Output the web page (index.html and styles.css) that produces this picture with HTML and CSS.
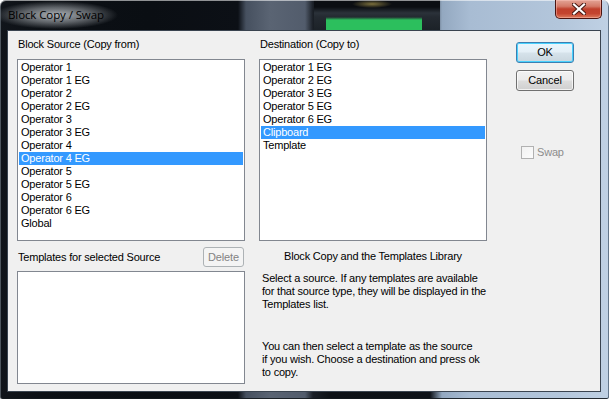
FILE: index.html
```html
<!DOCTYPE html>
<html>
<head>
<meta charset="utf-8">
<link rel="stylesheet" href="styles.css">
</head>
<body>
<div class="window">
  <div class="titlebar">
    <span class="title">Block Copy / Swap</span>
    <div class="close">
      <svg width="14" height="12" viewBox="0 0 14 12">
        <path d="M2 1.5 L12 10.5 M12 1.5 L2 10.5" stroke="#4a1a14" stroke-width="4.2" stroke-linecap="square"/>
        <path d="M2 1.5 L12 10.5 M12 1.5 L2 10.5" stroke="#ffffff" stroke-width="2.2" stroke-linecap="square"/>
      </svg>
    </div>
  </div>
  <div class="client">
    <div class="col">
      <div class="label">Block Source (Copy from)</div>
      <div class="listbox main">
        <div class="item">Operator 1</div>
        <div class="item">Operator 1 EG</div>
        <div class="item">Operator 2</div>
        <div class="item">Operator 2 EG</div>
        <div class="item">Operator 3</div>
        <div class="item">Operator 3 EG</div>
        <div class="item">Operator 4</div>
        <div class="item sel">Operator 4 EG</div>
        <div class="item">Operator 5</div>
        <div class="item">Operator 5 EG</div>
        <div class="item">Operator 6</div>
        <div class="item">Operator 6 EG</div>
        <div class="item">Global</div>
      </div>
      <div class="tplrow">
        <span class="label">Templates for selected Source</span>
        <div class="btn disabled small">Delete</div>
      </div>
      <div class="listbox tpl"></div>
    </div>
    <div class="col">
      <div class="label">Destination (Copy to)</div>
      <div class="listbox main">
        <div class="item">Operator 1 EG</div>
        <div class="item">Operator 2 EG</div>
        <div class="item">Operator 3 EG</div>
        <div class="item">Operator 5 EG</div>
        <div class="item">Operator 6 EG</div>
        <div class="item sel">Clipboard</div>
        <div class="item">Template</div>
      </div>
      <div class="heading">Block Copy and the Templates Library</div>
      <p class="para first">Select a source. If any templates are available<br>for that source type, they will be displayed in the<br>Templates list.</p>
      <p class="para second">You can then select a template as the source<br>if you wish. Choose a destination and press ok<br>to copy.</p>
    </div>
    <div class="col side">
      <div class="btn default">OK</div>
      <div class="btn">Cancel</div>
      <label class="check"><span class="box"></span><span class="clabel">Swap</span></label>
    </div>
  </div>
</div>
</body>
</html>
```
FILE: styles.css
```css
* { box-sizing: border-box; }
html, body { margin: 0; padding: 0; background: #ffffff; }
body { width: 609px; height: 399px; overflow: hidden; }

.window {
  width: 609px;
  height: 399px;
  border-radius: 6px 6px 2px 2px;
  display: flex;
  flex-direction: column;
  padding: 0 8px 7px 7px;
  box-shadow: inset 0 1px 0 rgba(255,255,255,0.55), inset 1px 0 0 rgba(120,130,140,0.6), inset -1px 0 0 rgba(60,80,100,0.7), inset 0 -1px 0 rgba(20,25,30,0.9);
  background:
    radial-gradient(ellipse 62px 14px at 56px 15px, rgba(200,205,210,0.85) 0%, rgba(160,165,170,0.55) 55%, rgba(160,165,170,0) 100%),
    radial-gradient(ellipse 20px 4px at 372px 4px, rgba(150,135,70,0.8) 0%, rgba(150,135,70,0) 100%),
    linear-gradient(to bottom, rgba(44,191,93,0) 0, #2cbf5d 3px, #2cbf5d 100%) 326px 17px / 96px 13px no-repeat,
    linear-gradient(to bottom, #0b0e12 0, #0b0e12 7px, #2b323a 13px, #242a31 17px, #1c2228 30px) 314px 0 / 126px 30px no-repeat,
    linear-gradient(to right,
      #11151b 0px, #0c1015 40px, #0a0e13 150px, #0c1016 238px,
      #46505f 246px, #5a6473 270px, #525c6c 305px, #1a1f26 313px,
      #0d1116 330px, #0e1218 430px, #93a8c0 442px, #a8bcd3 470px,
      #b3c6db 560px, #c0d1e4 609px);
}

.titlebar {
  height: 30px;
  flex: none;
  display: flex;
  align-items: flex-start;
}
.title {
  font-family: "Open Sans", "Noto Sans", sans-serif;
  font-size: 11.5px;
  color: #000;
  margin: 7px 0 0 1px;
  line-height: 16px;
  letter-spacing: -0.1px;
}
.close {
  margin-left: auto;
  margin-right: -1px;
  width: 47px;
  height: 19px;
  border: 1px solid #4b1410;
  border-top: none;
  border-radius: 0 0 5px 5px;
  background: linear-gradient(#e3a496 0%, #d47a68 35%, #c0402c 50%, #c4442f 75%, #dc7a5c 100%);
  box-shadow: inset 0 0 0 1px rgba(255,200,190,0.45);
  display: flex;
  align-items: center;
  justify-content: center;
}
.close svg { display: block; margin-top: -1px; }

.client {
  flex: 1;
  border: 1px solid #3a4450;
  background: #f0f0f0;
  display: grid;
  grid-template-columns: 228px 228px 73px;
  column-gap: 14px;
  padding: 7px 0 0 9px;
  font-family: "Liberation Sans", Arial, sans-serif;
  font-size: 11px;
  line-height: 13px;
  color: #000;
  letter-spacing: -0.2px;
}
.col { display: flex; flex-direction: column; }
.col.side { margin-left: 15px; padding-top: 4px; }

.label { padding-left: 1px; height: 13px; white-space: nowrap; }

.listbox {
  background: #fff;
  border: 1px solid #828790;
  padding: 1px;
}
.listbox.main { margin-top: 8px; height: 182px; }
.listbox.tpl { margin-top: 4px; height: 113px; }
.item { height: 13px; padding-left: 2px; white-space: nowrap; }
.item.sel { background: #3399ff; color: #fff; }

.tplrow {
  margin-top: 6px;
  height: 20px;
  display: flex;
  align-items: center;
  justify-content: space-between;
}

.btn {
  height: 21px;
  border: 1px solid #707070;
  border-radius: 3px;
  background: linear-gradient(#f2f2f2 0%, #ebebeb 48%, #dddddd 52%, #cfcfcf 100%);
  box-shadow: inset 0 0 0 1px rgba(255,255,255,0.7);
  display: flex;
  align-items: center;
  justify-content: center;
  font-size: 11px;
  letter-spacing: -0.1px;
}
.btn.default {
  border-color: #3c7fb1;
  box-shadow: inset 0 0 0 1px #48d1fe;
  background: linear-gradient(#eaf6fd 0%, #e4eff6 48%, #d6e3eb 52%, #c9d6de 100%);
}
.side .btn + .btn { margin-top: 7px; }
.btn.small { width: 41px; height: 20px; margin-right: 1px; }
.btn.disabled {
  border-color: #adb2b5;
  background: #f4f4f4;
  box-shadow: none;
  color: #838383;
}

.heading { margin-top: 9px; text-align: center; height: 13px; }
.para { margin: 0; padding-left: 3px; white-space: nowrap; }
.para.first { margin-top: 9px; }
.para.second { margin-top: 29px; }

.check {
  margin-top: 55px;
  margin-left: 5px;
  display: flex;
  align-items: center;
  height: 13px;
}
.box {
  width: 13px;
  height: 13px;
  border: 1px solid #b1b1b1;
  background: linear-gradient(135deg, #f1f1f1, #fcfcfc);
}
.clabel { margin-left: 3px; color: #8d8d8d; }
```
